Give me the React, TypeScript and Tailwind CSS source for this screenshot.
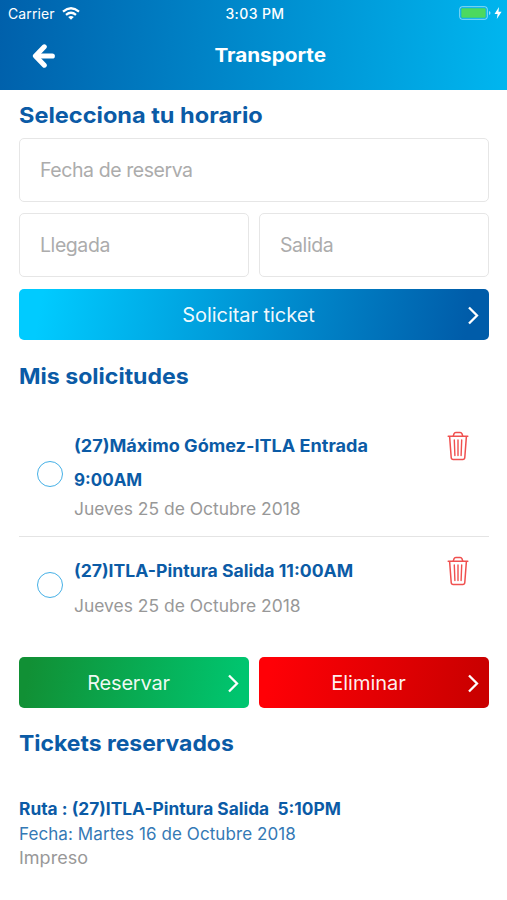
import React from "react";

function Chevron() {
  return (
    <svg className="absolute right-[9px] top-[16px] h-[20px] w-[14px]" viewBox="0 0 14 20" fill="none" stroke="white" strokeWidth="2.3">
      <path d="M3 2.5 L11 10.5 L3 18.5" />
    </svg>
  );
}

function Trash() {
  return (
    <svg className="h-[30px] w-[22px] shrink-0" viewBox="0 0 22 30" fill="none" stroke="#f0504f" strokeWidth="1.5" strokeLinecap="round" strokeLinejoin="round">
      <path d="M1.2 5.2H20.8M2.6 5.4L4.2 26.5Q4.4 28.6 6.2 28.6H15.8Q17.6 28.6 17.8 26.5L19.4 5.4" />
      <path d="M6.3 5L7 2.8Q7.5 1.4 8.8 1.4H13.2Q14.5 1.4 15 2.8L15.7 5" />
      <path d="M7.3 9L7.9 24.5M11 9V24.5M14.7 9L14.1 24.5" strokeWidth="1.4" />
    </svg>
  );
}

function Field({ label, className = "" }: { label: string; className?: string }) {
  return (
    <div className={`flex h-[64px] items-center rounded-[5px] border-[1.5px] border-[#e6e6e6] px-[20px] pt-px text-[19.5px] tracking-[-0.43px] text-[#acacac] ${className}`}>
      <span>{label}</span>
    </div>
  );
}

function Action({ label, className }: { label: string; className: string }) {
  return (
    <button className={`relative flex h-[51px] flex-1 items-center justify-center rounded-[5px] text-[20px] text-white/95 ${className}`}>
      <span>{label}</span>
      <Chevron />
    </button>
  );
}

function Heading({ children, className, stretch }: { children: string; className?: string; stretch: string }) {
  return (
    <h2 className={`h-[28px] whitespace-nowrap text-[22px] font-bold leading-[28px] text-[#0b5ba6] ${className ?? ""}`}>
      <span className={`inline-block origin-left ${stretch}`}>{children}</span>
    </h2>
  );
}

export default function App() {
  return (
    <div className="h-[900px] w-[507px] overflow-hidden bg-white font-['Inter',sans-serif]">
      <header className="h-[90px] bg-[linear-gradient(94deg,#0060ab_0%,#00b6ef_100%)] text-white">
        <div className="grid h-[28px] grid-cols-3 items-center pl-[8px] pr-[5px] text-[14px]">
          <div className="-mt-[2px] flex items-center gap-[7px]">
            <span className="tracking-[0.1px]">Carrier</span>
            <svg className="h-[13px] w-[18px]" viewBox="0 0 18 13" fill="none" stroke="white" strokeWidth="2.2">
              <path d="M1 4.6Q9 -2.1 17 4.6M4 7.9Q9 3.6 14 7.9" />
              <path d="M6.2 10.1Q9 8 11.8 10.1L9 12.8Z" fill="white" stroke="none" />
            </svg>
          </div>
          <div className="-mt-[2px] text-center font-medium tracking-[0.4px]"><span>3:03 PM</span></div>
          <div className="-mt-[2px] flex items-center justify-end gap-[3px]">
            <svg className="h-[14px] w-[32px]" viewBox="0 0 32 14" fill="none">
              <rect x=".7" y=".7" width="27.6" height="12.6" rx="2.5" stroke="white" strokeOpacity=".55" />
              <rect x="2.3" y="2.3" width="24.4" height="9.4" rx="1" fill="#4cd95f" />
              <path d="M30 5Q31.5 5.5 31.5 7T30 9Z" fill="white" fillOpacity=".6" />
            </svg>
            <svg className="h-[12px] w-[8px]" viewBox="0 0 8 12" fill="white"><path d="M5 0L.5 7H3.6L2.8 12L7.6 4.8H4.5Z" /></svg>
          </div>
        </div>
        <div className="grid h-[55px] grid-cols-[80px_1fr_80px] items-center">
          <svg className="ml-[32px] h-[24px] w-[24px]" viewBox="0 0 24 24" fill="none" stroke="white">
            <path d="M12.3 2.8L3.4 12L12.3 21.2" strokeLinejoin="round" strokeLinecap="round" strokeWidth="5" />
            <path d="M5 12H20.3" strokeWidth="5.2" strokeLinecap="round" />
          </svg>
          <h1 className="pl-[34px] pt-[1px] text-center text-[19px] font-bold"><span className="inline-block scale-x-[1.09]">Transporte</span></h1>
        </div>
      </header>

      <main className="pl-[19px] pr-[18px] pt-[11px]">
        <Heading stretch="scale-x-[1.07]">Selecciona tu horario</Heading>
        <Field label="Fecha de reserva" className="mt-[9px]" />
        <div className="mt-[11px] flex gap-[10px]">
          <Field label="Llegada" className="flex-1" />
          <Field label="Salida" className="flex-1" />
        </div>
        <div className="mt-[12px] flex">
          <Action label="Solicitar ticket" className="bg-[linear-gradient(100deg,#00cbff_5%,#005ca9_95%)] pr-[11px] tracking-[-0.05px]" />
        </div>
        <Heading className="mt-[22px]" stretch="scale-x-[1.05]">Mis solicitudes</Heading>

        <ul>
          <li className="flex h-[147px] border-b border-[#e4e4e4] pl-[18px] pr-[20px] pt-[38px]">
            <span className="mt-[33px] h-[26px] w-[26px] shrink-0 rounded-full border-[1.5px] border-[#45b0e6]" />
            <div className="ml-[11px] flex-1 whitespace-nowrap pt-px">
              <p className="text-[17px] font-bold leading-[34px] text-[#0b5ba6]"><span className="inline-block origin-left scale-x-[1.063]">(27)Máximo Gómez-ITLA Entrada</span><br /><span>9:00AM</span></p>
              <p className="text-[17px] leading-[24px] text-[#989898]"><span className="inline-block origin-left scale-x-[1.026]">Jueves 25 de Octubre 2018</span></p>
            </div>
            <div className="mt-[3px]"><Trash /></div>
          </li>
          <li className="flex h-[120px] pl-[18px] pr-[20px] pt-[16px]">
            <span className="mt-[19px] h-[26px] w-[26px] shrink-0 rounded-full border-[1.5px] border-[#45b0e6]" />
            <div className="ml-[11px] flex-1 whitespace-nowrap pt-px">
              <p className="text-[17px] font-bold leading-[34px] text-[#0b5ba6]"><span className="inline-block origin-left scale-x-[1.036]">(27)ITLA-Pintura Salida 11:00AM</span></p>
              <p className="mt-[6px] text-[17px] leading-[24px] text-[#989898]"><span className="inline-block origin-left scale-x-[1.026]">Jueves 25 de Octubre 2018</span></p>
            </div>
            <div className="mt-[3px]"><Trash /></div>
          </li>
        </ul>

        <div className="flex gap-[10px]">
          <Action label="Reservar" className="bg-[linear-gradient(100deg,#119035_5%,#00c56f_95%)] pr-[11px] tracking-[-0.2px]" />
          <Action label="Eliminar" className="bg-[linear-gradient(100deg,#ff0006_5%,#ca0000_95%)] pr-[11px]" />
        </div>
        <Heading className="mt-[21px]" stretch="scale-x-[1.042]">Tickets reservados</Heading>
        <div className="mt-[40px] whitespace-pre text-[17px] leading-[24.5px]">
          <p className="font-bold text-[#0b5ba6]"><span className="inline-block origin-left scale-x-[1.02]">Ruta : (27)ITLA-Pintura Salida  5:10PM</span></p>
          <p className="tracking-[0.08px] text-[#3479b5]"><span>Fecha: Martes 16 de Octubre 2018</span></p>
          <p className="text-[#989898]"><span className="inline-block origin-left scale-x-[1.06]">Impreso</span></p>
        </div>
      </main>
    </div>
  );
}
